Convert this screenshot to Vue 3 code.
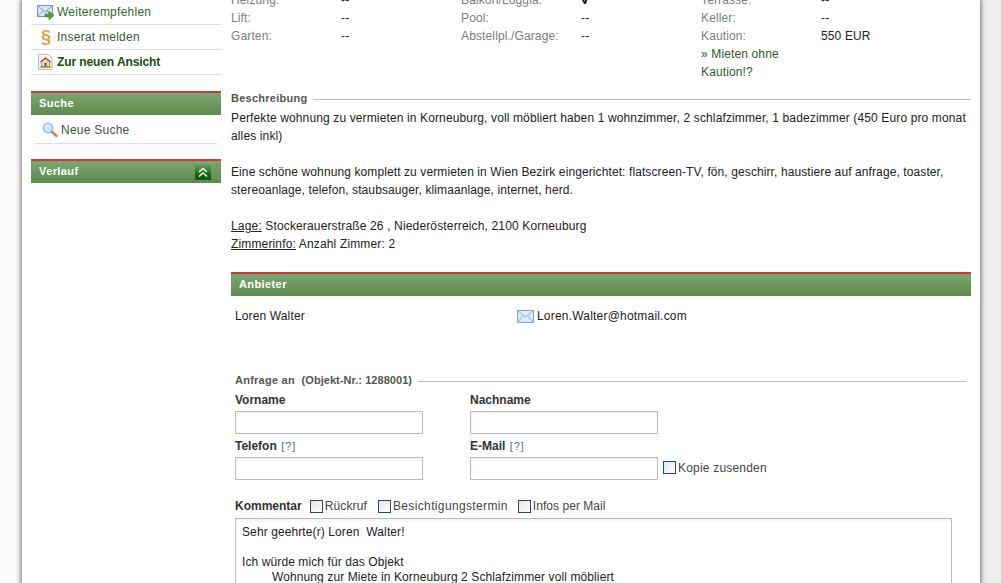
<script setup>
const rows = [
  ['Heizung:', '--', 'Balkon/Loggia:', 'check', 'Terrasse:', '--'],
  ['Lift:', '--', 'Pool:', '--', 'Keller:', '--'],
  ['Garten:', '--', 'Abstellpl./Garage:', '--', 'Kaution:', '550 EUR'],
]
</script>

<template>
  <div class="page">
    <div class="shell">
      <aside class="side">
        <ul class="menu">
          <li class="menu-item">
            <svg class="ico" width="18" height="16" viewBox="0 0 18 16">
              <rect x="0.5" y="1.5" width="15" height="11" fill="#d6e6f7" stroke="#6f9ac8" />
              <path d="M1 2l7 6 7-6M1 12l5-5M15 12l-5-5" fill="none" stroke="#7ea6d2" />
              <path d="M8 10h4V7l5 4.5L12 16v-3H8z" fill="#5aa03c" stroke="#3d7a2a" stroke-width=".6" />
            </svg>
            <span class="link">Weiterempfehlen</span>
          </li>
          <li class="menu-item">
            <span class="ico para">§</span>
            <span class="link plain">Inserat melden</span>
          </li>
          <li class="menu-item">
            <svg class="ico" width="18" height="16" viewBox="0 0 18 16">
              <path d="M1.5.5h10l3.5 3.5v11.500H1.500z" fill="#f7f7f7" stroke="#bbb" />
              <path d="M3.500 8L8.500 4l5 4-1 .8v3.700h-8V8.800z" fill="#e8d9b4" stroke="#b3662e" stroke-width=".7" />
              <path d="M3.500 8L8.500 4l5 4" fill="none" stroke="#b5402a" stroke-width="1.200" />
              <rect x="7.300" y="9" width="2.400" height="3.500" fill="#8a5a2c" />
              <rect x="3" y="12.500" width="11" height="1.300" fill="#6ea24f" />
            </svg>
            <strong class="link strong">Zur neuen Ansicht</strong>
          </li>
        </ul>

        <h3 class="bar side-bar first">Suche</h3>
        <div class="search-item">
          <svg class="search-ico" width="16" height="15" viewBox="0 0 16 15">
            <path d="M9 9l5.500 5" stroke="#c4854a" stroke-width="2.400" stroke-linecap="round" />
            <circle cx="6" cy="6" r="4.800" fill="#cfe4fa" stroke="#8fb4dc" stroke-width="1.200" />
            <path d="M3.500 5.500a3 3 0 0 1 2.500-2.200" fill="none" stroke="#fff" />
          </svg>
          <span class="link plain">Neue Suche</span>
        </div>

        <h3 class="bar side-bar second">
          <span>Verlauf</span>
          <span class="toggle">
            <svg width="16" height="16" viewBox="0 0 16 16">
              <path d="M4 8l4-3.500L12 8M4 12.500L8 9l4 3.500" fill="none" stroke="#fff" stroke-width="1.500" />
            </svg>
          </span>
        </h3>
      </aside>

      <main class="main">
        <div class="facts">
          <template v-for="(row, i) in rows" :key="i">
            <template v-for="(cell, j) in row" :key="j">
              <span v-if="j % 2 === 0" class="fact-label">{{ cell }}</span>
              <span v-else-if="cell === 'check'" class="fact-value">
                <svg class="tick" width="8" height="12" viewBox="0 0 8 12"><path d="M0.500 7l2.500 4.500L7 1" fill="none" stroke="#222" stroke-width="2" /></svg>
              </span>
              <span v-else class="fact-value">{{ cell }}</span>
            </template>
          </template>
          <span class="span-4"></span>
          <span class="fact-promo">» Mieten ohne Kaution!?</span>
        </div>

        <div class="legend desc-legend">
          <span>Beschreibung</span><i class="rule"></i>
        </div>
        <div class="desc">
          <p>Perfekte wohnung zu vermieten in Korneuburg, voll möbliert haben 1 wohnzimmer, 2 schlafzimmer, 1 badezimmer (450 Euro pro monat alles inkl)</p>
          <p class="para-two">Eine schöne wohnung komplett zu vermieten in Wien Bezirk eingerichtet: flatscreen-TV, fön, geschirr, haustiere auf anfrage, toaster, stereoanlage, telefon, staubsauger, klimaanlage, internet, herd.</p>
          <p class="tight"><u>Lage:</u> Stockerauerstraße 26 , Niederösterreich, 2100 Korneuburg<br /><u>Zimmerinfo:</u> Anzahl Zimmer: 2</p>
        </div>

        <h3 class="bar anbieter">Anbieter</h3>
        <div class="contact">
          <span class="contact-name">Loren Walter</span>
          <span class="contact-mail">
            <svg width="17" height="13" viewBox="0 0 17 13">
              <rect x="0.500" y="0.500" width="16" height="12" fill="#dbe9f8" stroke="#7fa5cf" />
              <path d="M1 1l7.500 6L16 1M1 12l5.500-6.500M16 12l-5.500-6.500" fill="none" stroke="#8fb2d8" />
            </svg>
            Loren.Walter@hotmail.com
          </span>
        </div>

        <form class="form" @submit.prevent>
          <div class="legend">
            <span>Anfrage an &nbsp;<span class="legend-id">(Objekt-Nr.: 1288001)</span></span><i class="rule"></i>
          </div>
          <div class="fields">
            <label class="field">
              <span class="field-label">Vorname</span>
              <input class="input" type="text" />
            </label>
            <label class="field">
              <span class="field-label">Nachname</span>
              <input class="input" type="text" />
            </label>
            <label class="field">
              <span class="field-label">Telefon <em class="hint">[?]</em></span>
              <input class="input" type="text" />
            </label>
            <label class="field">
              <span class="field-label">E-Mail <em class="hint">[?]</em></span>
              <span class="with-check">
                <input class="input" type="text" />
                <span class="box first-box"></span>
                <span class="check-text kopie">Kopie zusenden</span>
              </span>
            </label>
          </div>
          <div class="comment-head">
            <strong class="field-label">Kommentar</strong>
            <span class="box"></span><span class="check-text c1">Rückruf</span>
            <span class="box"></span><span class="check-text c2">Besichtigungstermin</span>
            <span class="box"></span><span class="check-text c3">Infos per Mail</span>
          </div>
          <div class="textarea">
            <div>Sehr geehrte(r) Loren&nbsp; Walter!</div>
            <div>&nbsp;</div>
            <div>Ich würde mich für das Objekt</div>
            <div class="indent">Wohnung zur Miete in Korneuburg 2 Schlafzimmer voll möbliert</div>
          </div>
        </form>
      </main>
    </div>
  </div>
</template>

<style>
html, body { margin: 0; background: #f4f4f4; }
</style>

<style scoped>
* { box-sizing: border-box; }
.page {
  height: 583px;
  overflow: hidden;
  padding-left: 22px;
  background: linear-gradient(90deg, #fafafa 0, #efefef 100%);
  font: 12px/18px "Liberation Sans", Arial, sans-serif;
  letter-spacing: .13px;
  color: #222;
}
.shell {
  width: 958px;
  height: 640px;
  display: flex;
  background: #fff;
  padding-left: 9px;
  box-shadow: 0 0 5px 1px rgba(0, 0, 0, .55);
}
.side { width: 190px; flex: none; }
.menu { list-style: none; margin: 0; padding: 0; }
.menu-item {
  height: 25px;
  border-bottom: 1px solid #dcdcdc;
  display: flex;
  align-items: center;
  padding-left: 6px;
}
.ico { width: 18px; flex: none; margin-right: 2px; }
.para {
  font: bold 18px/24px "Liberation Sans", sans-serif;
  color: #d9a63f;
  text-align: center;
  letter-spacing: 0;
}
.link { color: #2f6a2c; letter-spacing: .25px; }
.link.plain { color: #44523f; }
.link.strong { color: #14500f; font-weight: bold; letter-spacing: -.1px; }
.bar {
  margin: 0;
  height: 24px;
  border-top: 2px solid #c9383c;
  background: linear-gradient(#7ca670, #5d8a4d);
  color: #fff;
  font: bold 11px/20px "Liberation Sans", Arial, sans-serif;
  letter-spacing: .4px;
  padding: 0 0 2px 8px;
  display: flex;
  align-items: center;
  justify-content: space-between;
}
.side-bar.first { margin-top: 16px; }
.side-bar.second { margin-top: 15px; padding: 0 10px 0 8px; }
.side-bar.second > span:first-child { margin-top: -2px; }
.toggle {
  width: 16px;
  height: 16px;
  background: linear-gradient(#6fa467, #0f5f0a 70%);
  display: block;
}
.toggle svg { display: block; }
.search-item {
  height: 29px;
  margin: 0 4px;
  border-bottom: 1px solid #dcdcdc;
  display: flex;
  align-items: center;
  padding: 2px 0 0 7px;
}
.search-ico { margin: -2px 3px 0 0; }
.main { width: 740px; margin-left: 10px; flex: none; }
.facts {
  margin-top: -9px;
  display: grid;
  grid-template-columns: 110px 120px 120px 120px 120px 150px;
  grid-auto-rows: 18px;
}
.fact-label { color: #7d7d7d; }
.fact-value { color: #222; }
.tick { display: block; margin: 1px 0 0 1px; }
.span-4 { grid-column: span 4; }
.fact-promo { grid-row: span 2; color: #2c5a2c; width: 100px; }
.legend {
  display: flex;
  align-items: center;
  font-weight: bold;
  font-size: 11px;
  color: #555;
  letter-spacing: .25px;
}
.legend-id { letter-spacing: .05px; }
.legend .rule {
  flex: 1;
  height: 1px;
  background: #bdbdbd;
  margin: 2px 0 0 6px;
}
.desc-legend { margin-top: 8px; }
.desc { margin-top: 2px; }
.desc p { margin: 0 0 18px; }
.desc p.para-two { letter-spacing: .1px; }
.desc p.tight { margin: 0; letter-spacing: .15px; }
.anbieter { margin-top: 19px; }
.contact {
  display: flex;
  margin-top: 11px;
  padding-left: 4px;
}
.contact-name { width: 282px; }
.contact-mail { display: flex; align-items: center; gap: 3px; letter-spacing: .2px; }
.form { margin: 46px 4px 0; }
.fields {
  margin-top: 1px;
  display: grid;
  grid-template-columns: 235px 1fr;
  row-gap: 2px;
}
.field { display: block; }
.field-label {
  display: block;
  font-weight: bold;
  color: #333;
  letter-spacing: 0;
  padding-top: 1px;
  height: 19px;
  margin-bottom: 2px;
}
.hint { font-style: normal; font-weight: normal; color: #5f6b7c; font-size: 11px; margin-left: 1px; letter-spacing: 1px; }
.input {
  display: block;
  width: 188px;
  height: 23px;
  margin: 0;
  padding: 0 3px;
  border: 1px solid #bbb;
  background: #fff;
  box-shadow: inset 1px 2px 3px rgba(0, 0, 0, .05);
  border-radius: 0;
  outline: none;
}
.with-check { display: flex; align-items: center; }
.box {
  display: inline-block;
  flex: none;
  width: 13px;
  height: 13px;
  border: 1px solid #1f4a78;
  background: linear-gradient(135deg, #e4e4e4, #fff);
}
.first-box { margin: -2px 2px 0 5px; }
.kopie { margin-top: -1px; letter-spacing: .2px; }
.comment-head {
  margin-top: 17px;
  display: flex;
  align-items: center;
  height: 18px;
}
.comment-head .field-label { margin: 0 8px 0 0; height: 18px; padding-top: 0; }
.comment-head .box { margin-right: 2px; }
.check-text { color: #444; }
.c1 { margin-right: 11px; }
.c2 { margin-right: 10px; letter-spacing: .36px; }
.c3 { letter-spacing: .04px; }
.textarea {
  width: 717px;
  height: 120px;
  margin-top: 3px;
  padding: 6px;
  border: 1px solid #bbb;
  box-shadow: inset 1px 2px 3px rgba(0, 0, 0, .05);
  line-height: 15px;
  letter-spacing: .1px;
  color: #222;
}
.indent { padding-left: 30px; }
</style>
